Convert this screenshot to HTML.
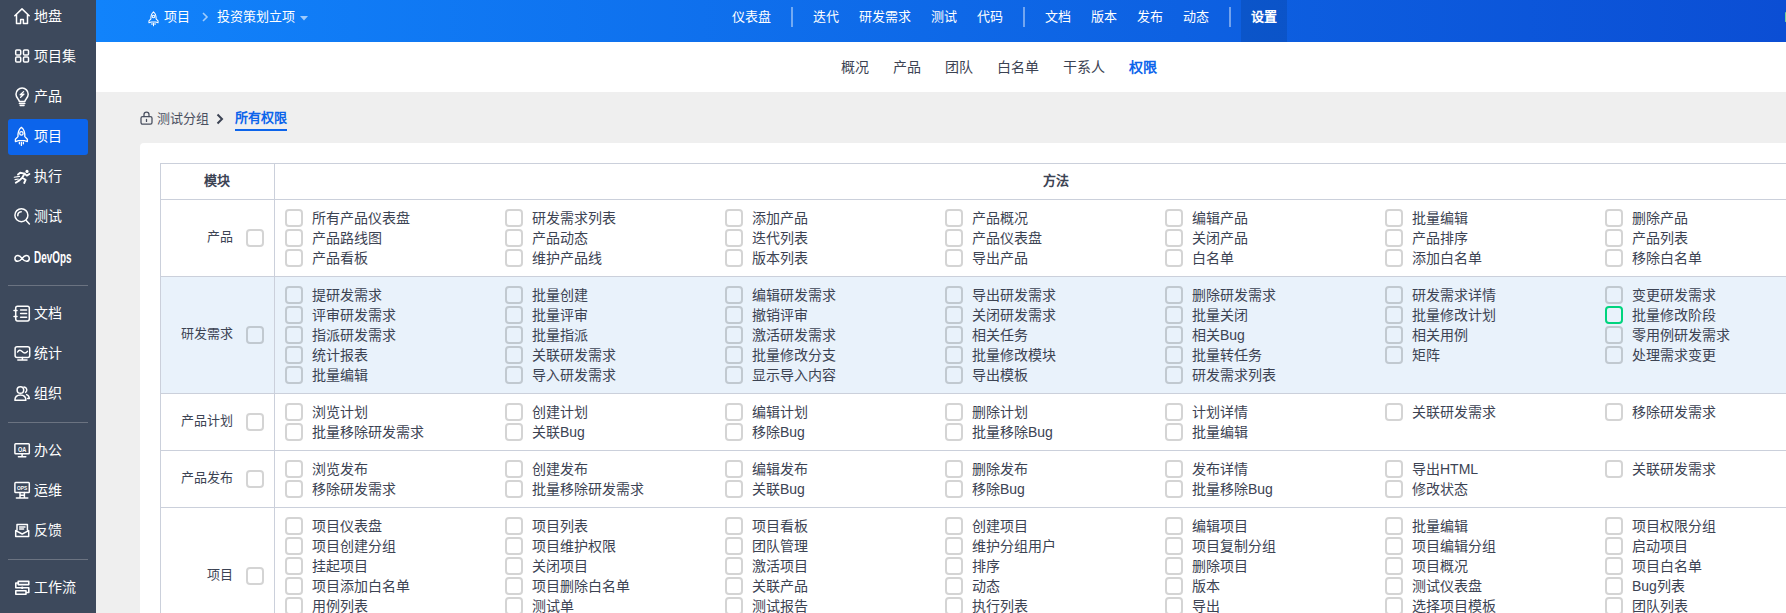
<!DOCTYPE html>
<html lang="zh-CN">
<head>
<meta charset="utf-8">
<title>权限</title>
<style>
*{box-sizing:border-box;margin:0;padding:0}
html,body{width:1786px;height:613px;overflow:hidden;background:#efefef;font-family:"Liberation Sans",sans-serif;color:#3c4353;font-size:14px}
#side{position:absolute;left:0;top:0;width:96px;height:613px;background:#3d495c}
.mi{position:absolute;left:8px;width:80px;height:36px;border-radius:3px;color:#fff;font-size:14px;line-height:36px;white-space:nowrap}
#ico{position:absolute;left:0;top:0;fill:none;stroke:#fff;stroke-width:1.5;stroke-linecap:round;stroke-linejoin:round}
.dvo{font-weight:bold;font-size:16px;transform:scaleX(.62);transform-origin:0 50%;left:26.4px !important}
.mi span{position:absolute;left:26px;top:0}
.mi.act{background:#0c64eb}
.dv{position:absolute;left:8px;width:80px;height:1px;background:#6b7381}
#head{position:absolute;left:96px;top:0;width:1690px;height:42px;background:linear-gradient(90deg,#1183fb 0%,#0b4ed4 100%)}
#head .t{position:absolute;top:-0.6px;height:42px;line-height:36px;color:#fff;font-size:13px;white-space:nowrap}
#head .sep{position:absolute;top:7px;width:2px;height:20px;background:rgba(255,255,255,.42)}
#sub{position:absolute;left:96px;top:42px;width:1690px;height:50px;background:#fff}
#sub .t{position:absolute;top:0;line-height:50px;font-size:14px;color:#3c4353;white-space:nowrap}
#crumb{position:absolute;left:140px;top:100px;height:36px;line-height:36px;font-size:13px;color:#4a5060;white-space:nowrap}
#panel{position:absolute;left:140px;top:143px;width:1720px;height:600px;background:#fff;border-radius:4px}
#tbl{position:absolute;left:20px;top:20px;width:1679px;border-left:1px solid #cbd0db;border-top:1px solid #cbd0db}
.th{height:36px;border-bottom:1px solid #cbd0db;position:relative;font-weight:bold;font-size:13px;line-height:34px;text-indent:-2px;color:#3c4353}
.th .c1{position:absolute;left:0;top:0;width:114px;height:35px;text-align:center;border-right:1px solid #cbd0db}
.th .c2{position:absolute;left:114px;top:0;width:1564px;height:35px;text-align:center;border-right:1px solid #cbd0db}
.tr{position:relative;border-bottom:1px solid #cbd0db;box-sizing:content-box}
.tr.hl{background:#e9f2fb}
.mod{position:absolute;left:0;top:0;bottom:0;width:114px;border-right:1px solid #cbd0db}
.mn{position:absolute;right:41.5px;top:50%;margin-top:-11px;line-height:20px;font-size:13px;white-space:nowrap}
.mc{position:absolute;left:85px;top:50%;margin-top:-9px}
.acts{position:absolute;left:114px;top:8px;width:1564px;padding-left:10px}
.ln{height:20px;white-space:nowrap;display:flex}
.it{width:220px;height:20px;position:relative;flex:none}
.cb{display:block;width:18px;height:18px;border:2px solid rgba(0,0,0,.17);border-radius:4px;background:transparent}
.it .cb{position:absolute;left:0;top:1px}
.cb.g{border-color:#00d47e}
.tx{position:absolute;left:27px;top:0;line-height:20px;font-size:14px;white-space:nowrap}
</style>
</head>
<body>
<div id="side">
  <div class="mi" style="top:-2px"><span>地盘</span></div>
  <div class="mi" style="top:38px"><span>项目集</span></div>
  <div class="mi" style="top:78px"><span>产品</span></div>
  <div class="mi act" style="top:119px"><span style="top:-1px">项目</span></div>
  <div class="mi" style="top:158px"><span>执行</span></div>
  <div class="mi" style="top:198px"><span>测试</span></div>
  <div class="mi" style="top:240px"><span class="dvo">DevOps</span></div>
  <div class="mi" style="top:295px"><span>文档</span></div>
  <div class="mi" style="top:335px"><span>统计</span></div>
  <div class="mi" style="top:375px"><span>组织</span></div>
  <div class="mi" style="top:432px"><span>办公</span></div>
  <div class="mi" style="top:472px"><span>运维</span></div>
  <div class="mi" style="top:512px"><span>反馈</span></div>
  <div class="mi" style="top:569px"><span>工作流</span></div>
  <div class="dv" style="top:285px"></div>
  <div class="dv" style="top:422px"></div>
  <div class="dv" style="top:559px"></div>
  <svg id="ico" width="96" height="613" viewBox="0 0 96 613">
    <!-- home -->
    <path d="M14.8 15.7 L22 8.9 L29.2 15.7 M16.5 14.4 V23.5 H20.6 V19.4 H23.4 V23.5 H27.5 V14.4"/>
    <!-- grid -->
    <rect x="15.7" y="50.1" width="5" height="5" rx="1"/><rect x="23.5" y="50.1" width="5" height="5" rx="1"/><rect x="15.7" y="57" width="5" height="5" rx="1"/><rect x="23.5" y="57" width="5" height="5" rx="1"/>
    <!-- bulb -->
    <path d="M19.3 101.4 C19.3 99.3 16 98.2 16 94.2 A6.1 6.1 0 0 1 28.2 94.2 C28.2 98.2 24.9 99.3 24.9 101.4 Z M19.4 103.5 H24.8 M20.2 105.5 H24" />
    <path d="M23.6 91.6 L20.2 94.8 L24 94.1 L20.6 97.2" stroke-width="1.3"/>
    <!-- rocket -->
    <path d="M21.4 127.3 C24.2 129.6 25 132.6 24.8 136.6 L27.4 139.2 V141.6 L24.4 140.6 H18.4 L15.4 141.6 V139.2 L18 136.6 C17.8 132.6 18.6 129.6 21.4 127.3 Z M21.4 142.4 V145.4 M19.4 142.4 V143.8 M23.4 142.4 V143.8" stroke-width="1.3"/>
    <circle cx="21.4" cy="133.4" r="1.7" stroke-width="1.3"/>
    <!-- runner -->
    <circle cx="27" cy="171.4" r="1.6" fill="#fff" stroke="none"/>
    <path d="M18 174.6 L20.2 172.8 L24.6 173.6 L22.2 177.8 L25.6 179.8 L24.2 183 M24.6 173.6 L26.8 175.6 L29.4 174 M22.2 177.8 L19.4 180.4 L15.8 182.8" stroke-width="1.9"/>
    <path d="M14.2 177.2 L19.6 176.4 M15 179.6 L18.4 179" stroke-width="1.1"/>
    <!-- search -->
    <circle cx="21.4" cy="215.2" r="6.5"/><path d="M26.2 220.4 L29.4 224 M17.8 215.8 A3.8 3.8 0 0 1 21.2 211.8"/>
    <!-- infinity -->
    <path d="M22.1 258.4 C20.5 256.2 19.3 255.5 17.8 255.5 A2.9 2.9 0 0 0 17.8 261.3 C19.3 261.3 20.5 260.6 22.1 258.4 C23.7 256.2 24.9 255.5 26.4 255.5 A2.9 2.9 0 0 1 26.4 261.3 C24.9 261.3 23.7 260.6 22.1 258.4 Z"/>
    <!-- doc -->
    <rect x="15.7" y="306.3" width="13.6" height="14.6" rx="1.8"/>
    <path d="M14 310.6 H17 M14 316.6 H17 M20.6 310 H26.6 M20.6 313.6 H26.6 M20.6 317.2 H26.6"/>
    <!-- stats -->
    <rect x="15.1" y="346.7" width="14.6" height="10.8" rx="2"/>
    <path d="M17.8 360 H27 M22.4 357.6 V360 M17.6 352 C18.8 349.6 20.4 349.6 22.2 351.6 C24 353.6 25.8 353.6 27.4 351.4" />
    <!-- org -->
    <circle cx="20.4" cy="390" r="3.3"/>
    <path d="M14.9 400.3 C14.9 396.6 17.2 394.9 20.4 394.9 C23.6 394.9 25.9 396.6 25.9 400.3 Z M24 387 A3 3 0 0 1 25.6 392.4 M26.6 394.6 C28.4 395.4 29.3 396.8 29.3 398.6 H27.6"/>
    <!-- OA -->
    <rect x="14.9" y="443.8" width="14.4" height="10" rx="0.8"/>
    <path d="M18.4 456.7 H25.8 M22.1 453.8 V456.7"/>
    <text x="22.1" y="451.6" font-size="6.6" font-weight="bold" text-anchor="middle" fill="#fff" stroke="none" font-family="Liberation Sans, sans-serif" textLength="8.4" lengthAdjust="spacingAndGlyphs">OA</text>
    <!-- OPS -->
    <rect x="14.9" y="482.6" width="14.4" height="10" rx="0.8"/>
    <path d="M16.4 498 H27.8 M20 492.6 V498 M24.4 492.6 V498 M20 495.2 H24.4"/>
    <text x="22.1" y="490.3" font-size="5.8" font-weight="bold" text-anchor="middle" fill="#fff" stroke="none" font-family="Liberation Sans, sans-serif" textLength="10.2" lengthAdjust="spacingAndGlyphs">OPS</text>
    <!-- feedback -->
    <path d="M17 530 V524.6 H27.4 V530 M15.7 530.6 L22.2 534 L28.7 530.6 V536.6 H15.7 Z M19.6 526.9 H25 M19.6 529 H23.6"/>
    <!-- workflow -->
    <path d="M18.2 581.4 H28.8 V584.6 H18.2 Z M15.8 590.8 H26 V594.2 H15.8 Z M18.2 583 H15.8 V587.7 H28.8 V592.5 H26" stroke-width="1.6"/>
    <circle cx="22.2" cy="587.7" r="1.2" fill="#fff" stroke="none"/>
  </svg>
</div>

<div id="head">
  <svg style="position:absolute;left:0;top:0;width:120px;height:42px;fill:none;stroke:#fff;stroke-width:1.35;stroke-linecap:round;stroke-linejoin:round" viewBox="0 0 120 42"><g transform="translate(57.5,11.9) scale(.76) translate(-21.4,-127.3)"><path d="M21.4 127.3 C24.2 129.6 25 132.6 24.8 136.6 L27.4 139.2 V141.6 L24.4 140.6 H18.4 L15.4 141.6 V139.2 L18 136.6 C17.8 132.6 18.6 129.6 21.4 127.3 Z M21.4 142.4 V145.4 M19.4 142.4 V143.8 M23.4 142.4 V143.8"/><circle cx="21.4" cy="133.4" r="1.7"/></g></svg>
  <div class="t" style="left:68.3px">项目</div>
  <svg style="position:absolute;left:105px;top:11px;width:8px;height:12px;fill:none;stroke:rgba(255,255,255,.6);stroke-width:1.6" viewBox="0 0 8 12"><path d="M2 2 L6 6 L2 10"/></svg>
  <div class="t" style="left:121.3px">投资策划立项</div>
  <svg style="position:absolute;left:204px;top:16px;width:8px;height:5px" viewBox="0 0 8 5"><path d="M0 0 H8 L4 4.5 Z" fill="rgba(255,255,255,.6)"/></svg>

  <div class="t" style="left:636px">仪表盘</div>
  <div class="sep" style="left:695px"></div>
  <div class="t" style="left:717px">迭代</div>
  <div class="t" style="left:763px">研发需求</div>
  <div class="t" style="left:835px">测试</div>
  <div class="t" style="left:881px">代码</div>
  <div class="sep" style="left:927px"></div>
  <div class="t" style="left:949px">文档</div>
  <div class="t" style="left:995px">版本</div>
  <div class="t" style="left:1041px">发布</div>
  <div class="t" style="left:1087px">动态</div>
  <div class="sep" style="left:1133px"></div>
  <div style="position:absolute;left:1145px;top:0;width:46px;height:42px;background:rgba(0,0,0,.1)"></div>
  <div class="t" style="left:1155px;font-weight:bold">设置</div>
  <div style="position:absolute;right:0;top:12px;width:1px;height:10px;background:#6fd39b;border-radius:1px"></div>
</div>

<div id="sub">
  <div class="t" style="left:745px">概况</div>
  <div class="t" style="left:797px">产品</div>
  <div class="t" style="left:849px">团队</div>
  <div class="t" style="left:901px">白名单</div>
  <div class="t" style="left:967px">干系人</div>
  <div class="t" style="left:1033px;color:#0c64eb;font-weight:bold">权限</div>
</div>

<div id="crumb">
  <svg style="position:absolute;left:0;top:11px;width:13px;height:14px;fill:none;stroke:#4a5060;stroke-width:1.3;stroke-linejoin:round;stroke-linecap:round" viewBox="0 0 13 14"><rect x="1" y="5.6" width="11" height="7.6" rx="1.6"/><path d="M4 5.6 V3.6 A2.5 2.5 0 0 1 9 3.6 V5.6 M6.5 8.4 V10.4"/></svg>
  <span style="position:absolute;left:17px;top:0.5px">测试分组</span>
  <svg style="position:absolute;left:76px;top:13px;width:8px;height:12px;fill:none;stroke:#3c4353;stroke-width:2" viewBox="0 0 8 12"><path d="M1.5 1.5 L6 6 L1.5 10.5"/></svg>
  <span style="position:absolute;left:95px;top:-0.5px;color:#0c64eb;font-weight:bold">所有权限</span>
  <div style="position:absolute;left:95px;top:29px;width:52px;height:2px;background:#0c64eb"></div>
</div>

<div id="panel">
  <div id="tbl">
    <div class="th"><div class="c1">模块</div><div class="c2">方法</div></div>
<div class="tr" style="height:76px">
<div class="mod"><span class="mn">产品</span><span class="cb mc"></span></div>
<div class="acts">
<div class="ln">
<div class="it"><span class="cb"></span><span class="tx">所有产品仪表盘</span></div>
<div class="it"><span class="cb"></span><span class="tx">研发需求列表</span></div>
<div class="it"><span class="cb"></span><span class="tx">添加产品</span></div>
<div class="it"><span class="cb"></span><span class="tx">产品概况</span></div>
<div class="it"><span class="cb"></span><span class="tx">编辑产品</span></div>
<div class="it"><span class="cb"></span><span class="tx">批量编辑</span></div>
<div class="it"><span class="cb"></span><span class="tx">删除产品</span></div>
</div>
<div class="ln">
<div class="it"><span class="cb"></span><span class="tx">产品路线图</span></div>
<div class="it"><span class="cb"></span><span class="tx">产品动态</span></div>
<div class="it"><span class="cb"></span><span class="tx">迭代列表</span></div>
<div class="it"><span class="cb"></span><span class="tx">产品仪表盘</span></div>
<div class="it"><span class="cb"></span><span class="tx">关闭产品</span></div>
<div class="it"><span class="cb"></span><span class="tx">产品排序</span></div>
<div class="it"><span class="cb"></span><span class="tx">产品列表</span></div>
</div>
<div class="ln">
<div class="it"><span class="cb"></span><span class="tx">产品看板</span></div>
<div class="it"><span class="cb"></span><span class="tx">维护产品线</span></div>
<div class="it"><span class="cb"></span><span class="tx">版本列表</span></div>
<div class="it"><span class="cb"></span><span class="tx">导出产品</span></div>
<div class="it"><span class="cb"></span><span class="tx">白名单</span></div>
<div class="it"><span class="cb"></span><span class="tx">添加白名单</span></div>
<div class="it"><span class="cb"></span><span class="tx">移除白名单</span></div>
</div>
</div></div>
<div class="tr hl" style="height:116px">
<div class="mod"><span class="mn">研发需求</span><span class="cb mc"></span></div>
<div class="acts">
<div class="ln">
<div class="it"><span class="cb"></span><span class="tx">提研发需求</span></div>
<div class="it"><span class="cb"></span><span class="tx">批量创建</span></div>
<div class="it"><span class="cb"></span><span class="tx">编辑研发需求</span></div>
<div class="it"><span class="cb"></span><span class="tx">导出研发需求</span></div>
<div class="it"><span class="cb"></span><span class="tx">删除研发需求</span></div>
<div class="it"><span class="cb"></span><span class="tx">研发需求详情</span></div>
<div class="it"><span class="cb"></span><span class="tx">变更研发需求</span></div>
</div>
<div class="ln">
<div class="it"><span class="cb"></span><span class="tx">评审研发需求</span></div>
<div class="it"><span class="cb"></span><span class="tx">批量评审</span></div>
<div class="it"><span class="cb"></span><span class="tx">撤销评审</span></div>
<div class="it"><span class="cb"></span><span class="tx">关闭研发需求</span></div>
<div class="it"><span class="cb"></span><span class="tx">批量关闭</span></div>
<div class="it"><span class="cb"></span><span class="tx">批量修改计划</span></div>
<div class="it"><span class="cb g"></span><span class="tx">批量修改阶段</span></div>
</div>
<div class="ln">
<div class="it"><span class="cb"></span><span class="tx">指派研发需求</span></div>
<div class="it"><span class="cb"></span><span class="tx">批量指派</span></div>
<div class="it"><span class="cb"></span><span class="tx">激活研发需求</span></div>
<div class="it"><span class="cb"></span><span class="tx">相关任务</span></div>
<div class="it"><span class="cb"></span><span class="tx">相关Bug</span></div>
<div class="it"><span class="cb"></span><span class="tx">相关用例</span></div>
<div class="it"><span class="cb"></span><span class="tx">零用例研发需求</span></div>
</div>
<div class="ln">
<div class="it"><span class="cb"></span><span class="tx">统计报表</span></div>
<div class="it"><span class="cb"></span><span class="tx">关联研发需求</span></div>
<div class="it"><span class="cb"></span><span class="tx">批量修改分支</span></div>
<div class="it"><span class="cb"></span><span class="tx">批量修改模块</span></div>
<div class="it"><span class="cb"></span><span class="tx">批量转任务</span></div>
<div class="it"><span class="cb"></span><span class="tx">矩阵</span></div>
<div class="it"><span class="cb"></span><span class="tx">处理需求变更</span></div>
</div>
<div class="ln">
<div class="it"><span class="cb"></span><span class="tx">批量编辑</span></div>
<div class="it"><span class="cb"></span><span class="tx">导入研发需求</span></div>
<div class="it"><span class="cb"></span><span class="tx">显示导入内容</span></div>
<div class="it"><span class="cb"></span><span class="tx">导出模板</span></div>
<div class="it"><span class="cb"></span><span class="tx">研发需求列表</span></div>
</div>
</div></div>
<div class="tr" style="height:56px">
<div class="mod"><span class="mn">产品计划</span><span class="cb mc"></span></div>
<div class="acts">
<div class="ln">
<div class="it"><span class="cb"></span><span class="tx">浏览计划</span></div>
<div class="it"><span class="cb"></span><span class="tx">创建计划</span></div>
<div class="it"><span class="cb"></span><span class="tx">编辑计划</span></div>
<div class="it"><span class="cb"></span><span class="tx">删除计划</span></div>
<div class="it"><span class="cb"></span><span class="tx">计划详情</span></div>
<div class="it"><span class="cb"></span><span class="tx">关联研发需求</span></div>
<div class="it"><span class="cb"></span><span class="tx">移除研发需求</span></div>
</div>
<div class="ln">
<div class="it"><span class="cb"></span><span class="tx">批量移除研发需求</span></div>
<div class="it"><span class="cb"></span><span class="tx">关联Bug</span></div>
<div class="it"><span class="cb"></span><span class="tx">移除Bug</span></div>
<div class="it"><span class="cb"></span><span class="tx">批量移除Bug</span></div>
<div class="it"><span class="cb"></span><span class="tx">批量编辑</span></div>
</div>
</div></div>
<div class="tr" style="height:56px">
<div class="mod"><span class="mn">产品发布</span><span class="cb mc"></span></div>
<div class="acts">
<div class="ln">
<div class="it"><span class="cb"></span><span class="tx">浏览发布</span></div>
<div class="it"><span class="cb"></span><span class="tx">创建发布</span></div>
<div class="it"><span class="cb"></span><span class="tx">编辑发布</span></div>
<div class="it"><span class="cb"></span><span class="tx">删除发布</span></div>
<div class="it"><span class="cb"></span><span class="tx">发布详情</span></div>
<div class="it"><span class="cb"></span><span class="tx">导出HTML</span></div>
<div class="it"><span class="cb"></span><span class="tx">关联研发需求</span></div>
</div>
<div class="ln">
<div class="it"><span class="cb"></span><span class="tx">移除研发需求</span></div>
<div class="it"><span class="cb"></span><span class="tx">批量移除研发需求</span></div>
<div class="it"><span class="cb"></span><span class="tx">关联Bug</span></div>
<div class="it"><span class="cb"></span><span class="tx">移除Bug</span></div>
<div class="it"><span class="cb"></span><span class="tx">批量移除Bug</span></div>
<div class="it"><span class="cb"></span><span class="tx">修改状态</span></div>
</div>
</div></div>
<div class="tr" style="height:136px">
<div class="mod"><span class="mn">项目</span><span class="cb mc"></span></div>
<div class="acts">
<div class="ln">
<div class="it"><span class="cb"></span><span class="tx">项目仪表盘</span></div>
<div class="it"><span class="cb"></span><span class="tx">项目列表</span></div>
<div class="it"><span class="cb"></span><span class="tx">项目看板</span></div>
<div class="it"><span class="cb"></span><span class="tx">创建项目</span></div>
<div class="it"><span class="cb"></span><span class="tx">编辑项目</span></div>
<div class="it"><span class="cb"></span><span class="tx">批量编辑</span></div>
<div class="it"><span class="cb"></span><span class="tx">项目权限分组</span></div>
</div>
<div class="ln">
<div class="it"><span class="cb"></span><span class="tx">项目创建分组</span></div>
<div class="it"><span class="cb"></span><span class="tx">项目维护权限</span></div>
<div class="it"><span class="cb"></span><span class="tx">团队管理</span></div>
<div class="it"><span class="cb"></span><span class="tx">维护分组用户</span></div>
<div class="it"><span class="cb"></span><span class="tx">项目复制分组</span></div>
<div class="it"><span class="cb"></span><span class="tx">项目编辑分组</span></div>
<div class="it"><span class="cb"></span><span class="tx">启动项目</span></div>
</div>
<div class="ln">
<div class="it"><span class="cb"></span><span class="tx">挂起项目</span></div>
<div class="it"><span class="cb"></span><span class="tx">关闭项目</span></div>
<div class="it"><span class="cb"></span><span class="tx">激活项目</span></div>
<div class="it"><span class="cb"></span><span class="tx">排序</span></div>
<div class="it"><span class="cb"></span><span class="tx">删除项目</span></div>
<div class="it"><span class="cb"></span><span class="tx">项目概况</span></div>
<div class="it"><span class="cb"></span><span class="tx">项目白名单</span></div>
</div>
<div class="ln">
<div class="it"><span class="cb"></span><span class="tx">项目添加白名单</span></div>
<div class="it"><span class="cb"></span><span class="tx">项目删除白名单</span></div>
<div class="it"><span class="cb"></span><span class="tx">关联产品</span></div>
<div class="it"><span class="cb"></span><span class="tx">动态</span></div>
<div class="it"><span class="cb"></span><span class="tx">版本</span></div>
<div class="it"><span class="cb"></span><span class="tx">测试仪表盘</span></div>
<div class="it"><span class="cb"></span><span class="tx">Bug列表</span></div>
</div>
<div class="ln">
<div class="it"><span class="cb"></span><span class="tx">用例列表</span></div>
<div class="it"><span class="cb"></span><span class="tx">测试单</span></div>
<div class="it"><span class="cb"></span><span class="tx">测试报告</span></div>
<div class="it"><span class="cb"></span><span class="tx">执行列表</span></div>
<div class="it"><span class="cb"></span><span class="tx">导出</span></div>
<div class="it"><span class="cb"></span><span class="tx">选择项目模板</span></div>
<div class="it"><span class="cb"></span><span class="tx">团队列表</span></div>
</div>
<div class="ln">
<div class="it"><span class="cb"></span><span class="tx">版本详情</span></div>
<div class="it"><span class="cb"></span><span class="tx">发布列表</span></div>
<div class="it"><span class="cb"></span><span class="tx">发布详情</span></div>
<div class="it"><span class="cb"></span><span class="tx">创建发布</span></div>
<div class="it"><span class="cb"></span><span class="tx">编辑发布</span></div>
<div class="it"><span class="cb"></span><span class="tx">删除发布</span></div>
<div class="it"><span class="cb"></span><span class="tx">关联研发需求</span></div>
</div>
</div></div>
  </div>
</div>
</body>
</html>
